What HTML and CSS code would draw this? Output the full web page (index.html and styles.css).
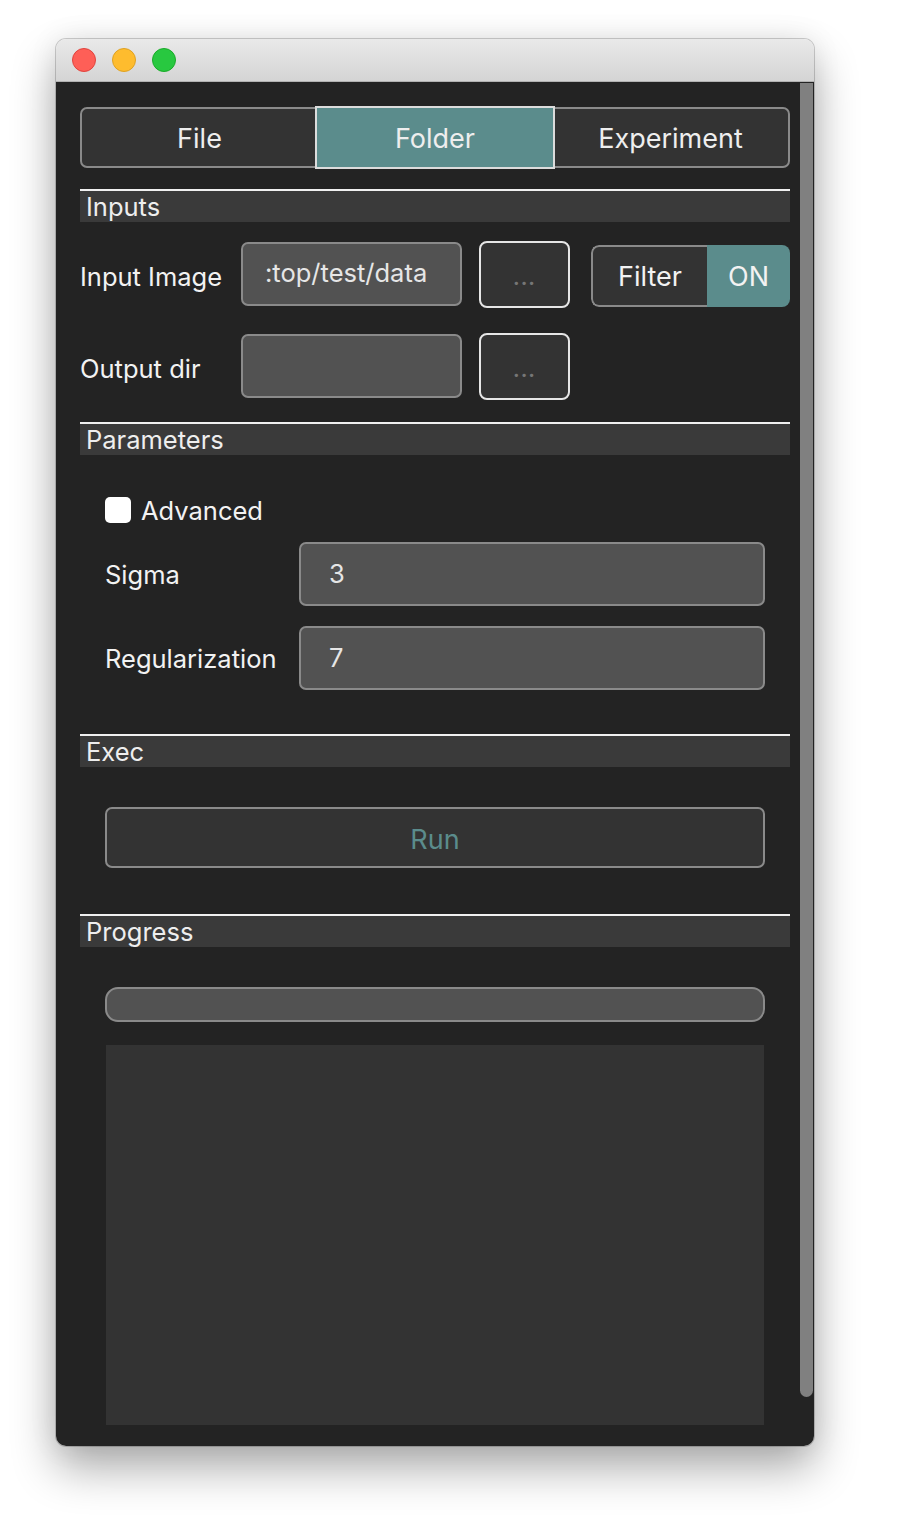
FILE: index.html
```html
<!DOCTYPE html>
<html>
<head>
<meta charset="utf-8">
<link rel="stylesheet" href="styles.css">
</head>
<body>
<div class="window">
  <div class="titlebar">
    <span class="light red"></span>
    <span class="light yellow"></span>
    <span class="light green"></span>
  </div>
  <div class="content">
    <div class="tabs">
      <div class="tab">File</div>
      <div class="tab active">Folder</div>
      <div class="tab">Experiment</div>
    </div>

    <div class="section-head first">Inputs</div>
    <div class="inputs">
      <div class="row">
        <div class="label lbl-input">Input Image</div>
        <div class="field path"><span class="path-text">:top/test/data</span></div>
        <div class="browse">...</div>
        <div class="toggle">
          <div class="toggle-off">Filter</div>
          <div class="toggle-on">ON</div>
        </div>
      </div>
      <div class="row">
        <div class="label lbl-input">Output dir</div>
        <div class="field path"></div>
        <div class="browse">...</div>
      </div>
    </div>

    <div class="section-head">Parameters</div>
    <div class="params">
      <div class="check-row">
        <span class="checkbox"></span>
        <span class="label">Advanced</span>
      </div>
      <div class="param-row">
        <div class="label lbl-param">Sigma</div>
        <div class="field num">3</div>
      </div>
      <div class="param-row">
        <div class="label lbl-param">Regularization</div>
        <div class="field num">7</div>
      </div>
    </div>

    <div class="section-head">Exec</div>
    <div class="exec">
      <div class="run">Run</div>
    </div>

    <div class="section-head">Progress</div>
    <div class="progress">
      <div class="bar"></div>
      <div class="log"></div>
    </div>

    <div class="scrollbar"></div>
  </div>
</div>
</body>
</html>
```

FILE: styles.css
```css
html, body {
  margin: 0;
  padding: 0;
  background: #ffffff;
}
body {
  font-family: Inter, Roboto, "Liberation Sans", sans-serif;
  width: 914px;
  height: 1538px;
  overflow: hidden;
}
.window {
  margin: 39px 0 0 56px;
  width: 758px;
  height: 1407px;
  border-radius: 10px;
  overflow: hidden;
  display: flex;
  flex-direction: column;
  box-shadow: 0 0 0 1px rgba(0,0,0,0.18), 0 22px 45px rgba(0,0,0,0.33), 0 0 30px rgba(0,0,0,0.08);
}
.titlebar {
  height: 43px;
  flex: none;
  background: linear-gradient(#e9e9e9, #d4d4d4);
  border-bottom: 1px solid #b2b2b2;
  display: flex;
  align-items: center;
  gap: 16px;
  padding-left: 16px;
  box-sizing: border-box;
}
.light {
  width: 24px;
  height: 24px;
  border-radius: 50%;
  box-sizing: border-box;
}
.red { background: #fe5f57; border: 1px solid #e0443e; }
.yellow { background: #febc2e; border: 1px solid #dea123; }
.green { background: #28c840; border: 1px solid #1aab29; }

.content {
  flex: 1;
  background: #232323;
  padding: 25px 24px 0 24px;
  position: relative;
  display: flex;
  flex-direction: column;
  color: #eeeeee;
}
.scrollbar {
  position: absolute;
  right: 1px;
  top: 1px;
  width: 13px;
  height: 1314px;
  background: #808080;
  border-radius: 0 0 7px 7px;
}

.tabs {
  display: flex;
  height: 61px;
  width: 710px;
  box-sizing: border-box;
  border: 2px solid #8a8a8a;
  border-radius: 7px;
  background: #333333;
}
.tab {
  flex: 1;
  display: flex;
  align-items: center;
  justify-content: center;
  font-size: 27px;
  color: #eeeeee;
  padding-top: 2px;
}
.tab.active {
  background: #5b8c8c;
  outline: 2px solid #dcdcdc;
  outline-offset: 0;
  margin: -1px 0;
  flex: 0 0 236px;
  box-sizing: border-box;
}

.section-head {
  margin-top: 23px;
  border-top: 2px solid #f0f0f0;
  background: #3a3a3a;
  line-height: 31px;
  font-size: 25.5px;
  padding-left: 6px;
  width: 710px;
  box-sizing: border-box;
  height: 33px;
  color: #eeeeee;
}
.section-head.first { margin-top: 21px; }

.label {
  font-size: 25.5px;
  color: #f2f2f2;
}

.inputs {
  display: flex;
  flex-direction: column;
  gap: 26px;
  padding-top: 19px;
}
.row {
  display: flex;
  align-items: center;
  height: 66px;
}
.lbl-input {
  width: 161px;
  flex: none;
  padding-top: 4px;
}
.field {
  background: #525252;
  border: 2px solid #8a8a8a;
  border-radius: 7px;
  box-sizing: border-box;
  color: #e6e6e6;
  font-size: 25.5px;
}
.path {
  width: 221px;
  height: 64px;
  overflow: hidden;
  padding-left: 22px;
  display: flex;
  align-items: center;
  white-space: nowrap;
}
.path-text {
  margin-top: -3px;
}
.browse {
  margin-left: 17px;
  width: 91px;
  height: 67px;
  box-sizing: border-box;
  border: 2px solid #e6e6e6;
  border-radius: 8px;
  background: #333333;
  color: #767676;
  font-size: 20px;
  font-weight: bold;
  letter-spacing: 1px;
  display: flex;
  align-items: center;
  justify-content: center;
  padding-top: 8px;
}
.toggle {
  margin-left: 21px;
  margin-top: 4px;
  width: 199px;
  height: 62px;
  display: flex;
  border-radius: 8px;
  overflow: hidden;
  box-sizing: border-box;
}
.toggle-off {
  flex: 0 0 116px;
  background: #333333;
  border: 2px solid #8a8a8a;
  border-right: none;
  border-radius: 8px 0 0 8px;
  box-sizing: border-box;
  display: flex;
  align-items: center;
  justify-content: center;
  font-size: 27px;
  color: #f2f2f2;
}
.toggle-on {
  flex: 1;
  background: #5b8c8c;
  display: flex;
  align-items: center;
  justify-content: center;
  font-size: 27px;
  color: #f2f2f2;
}

.params {
  padding: 42px 25px 22px 25px;
  display: flex;
  flex-direction: column;
  gap: 21px;
}
.check-row {
  display: flex;
  align-items: center;
  gap: 10px;
  height: 26px;
  margin-bottom: -2px;
}
.checkbox {
  width: 26px;
  height: 26px;
  border-radius: 5px;
  background: #ffffff;
  flex: none;
}
.param-row {
  display: flex;
  align-items: center;
  height: 63px;
}
.lbl-param {
  width: 194px;
  flex: none;
  padding-top: 2px;
}
.num {
  width: 467px;
  height: 64px;
  padding-left: 28px;
  display: flex;
  align-items: center;
}

.exec {
  padding: 40px 25px 23px 25px;
}
.run {
  width: 660px;
  height: 61px;
  box-sizing: border-box;
  border: 2px solid #8a8a8a;
  border-radius: 7px;
  background: #333333;
  color: #5b8c8c;
  font-size: 27px;
  display: flex;
  align-items: center;
  justify-content: center;
  padding-top: 3px;
}

.progress {
  padding: 40px 25px 0 25px;
  display: flex;
  flex-direction: column;
}
.bar {
  width: 660px;
  height: 35px;
  box-sizing: border-box;
  background: #525252;
  border: 2px solid #8a8a8a;
  border-radius: 13px;
}
.log {
  margin: 23px 0 0 1px;
  width: 658px;
  height: 380px;
  background: #333333;
}
```
